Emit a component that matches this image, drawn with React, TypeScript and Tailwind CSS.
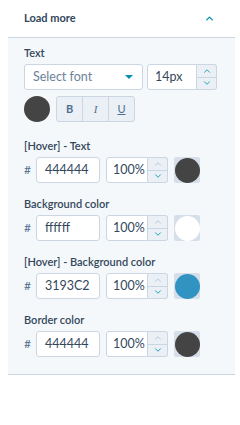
import { ChevronUp, ChevronDown } from "lucide-react";

function Stepper({ upDisabled = false }: { upDisabled?: boolean }) {
  return (
    <div className="flex w-[20px] flex-col border border-l-0 border-[#cbd6e2] bg-[#eaf0f6] rounded-r-[3px]">
      <div className="flex flex-1 items-center justify-center border-b border-[#cbd6e2]">
        <ChevronUp size={10} strokeWidth={2} className={upDisabled ? "text-[#b0c1d4]" : "text-[#0091ae]"} />
      </div>
      <div className="flex flex-1 items-center justify-center">
        <ChevronDown size={10} strokeWidth={2} className="text-[#0091ae]" />
      </div>
    </div>
  );
}

function ColorRow({ label, hex, color, first = false }: { label: string; hex: string; color: string; first?: boolean }) {
  return (
    <div className={first ? "mt-[17px]" : "mt-[14px]"}>
      <p className="text-[11px] font-semibold leading-[14px] text-[#33475b]">{label}</p>
      <div className="mt-[4px] flex h-[26px] items-center">
        <span className="w-[12px] text-[12px] text-[#516f90]">#</span>
        <div className="flex h-full w-[64px] items-center rounded-[3px] border border-[#cbd6e2] bg-white pl-[8px] text-[12.5px] text-[#33475b]">
          {hex}
        </div>
        <div className="ml-[6px] flex h-full">
          <div className="flex w-[42px] items-center rounded-l-[3px] border border-[#cbd6e2] bg-white pl-[6px] text-[12.5px] text-[#33475b]">
            100%
          </div>
          <Stepper upDisabled />
        </div>
        <div className="ml-[6px] flex h-[26px] w-[26px] items-center justify-center rounded-[2px] bg-[#d6dfe9]">
          <div className="h-[25px] w-[25px] rounded-full" style={{ backgroundColor: color }} />
        </div>
      </div>
    </div>
  );
}

export default function App() {
  return (
    <div className="h-[425px] w-[240px] bg-white pl-[8px] pr-[5px] font-['Lato','Noto_Sans',sans-serif]">
      {/* header */}
      <div className="flex h-[38px] items-center justify-between border-b border-[#cbd6e2] pl-[16px] pr-[20px]">
        <span className="text-[11px] font-bold text-[#33475b]">Load more</span>
        <ChevronUp size={11} strokeWidth={3} className="text-[#0091ae]" />
      </div>

      {/* panel */}
      <div className="border-b border-[#cbd6e2] bg-[#f5f8fa] px-[16px] pb-[17px] pt-[8px]">
        <p className="text-[11px] font-semibold leading-[14px] text-[#33475b]">Text</p>
        <div className="mt-[4px] flex h-[26px]">
          <div className="flex w-[119px] items-center justify-between rounded-[3px] border border-[#cbd6e2] bg-white pl-[8px] pr-[9px] text-[12.5px] text-[#6b8299]">
            Select font
            <span className="h-0 w-0 border-x-[4px] border-t-[4px] border-x-transparent border-t-[#0091ae]" />
          </div>
          <div className="ml-[4px] flex">
            <div className="flex w-[50px] items-center rounded-l-[3px] border border-[#cbd6e2] bg-white pl-[7px] text-[12.5px] text-[#33475b]">
              14px
            </div>
            <Stepper />
          </div>
        </div>

        <div className="mt-[6px] flex items-center">
          <div className="h-[26px] w-[26px] rounded-full bg-[#444444]" />
          <div className="ml-[6px] flex h-[26px] overflow-hidden rounded-[3px] border border-[#cbd6e2] bg-[#eaf0f6] text-[11px] text-[#516f90]">
            <span className="flex w-[26px] items-center justify-center border-r border-[#cbd6e2] font-bold">B</span>
            <span className="flex w-[26px] items-center justify-center border-r border-[#cbd6e2] font-['Liberation_Serif',serif] italic">I</span>
            <span className="flex w-[25px] items-center justify-center underline">U</span>
          </div>
        </div>

        <ColorRow first label="[Hover] - Text" hex="444444" color="#444444" />
        <ColorRow label="Background color" hex="ffffff" color="#ffffff" />
        <ColorRow label="[Hover] - Background color" hex="3193C2" color="#3193C2" />
        <ColorRow label="Border color" hex="444444" color="#444444" />
      </div>
    </div>
  );
}
